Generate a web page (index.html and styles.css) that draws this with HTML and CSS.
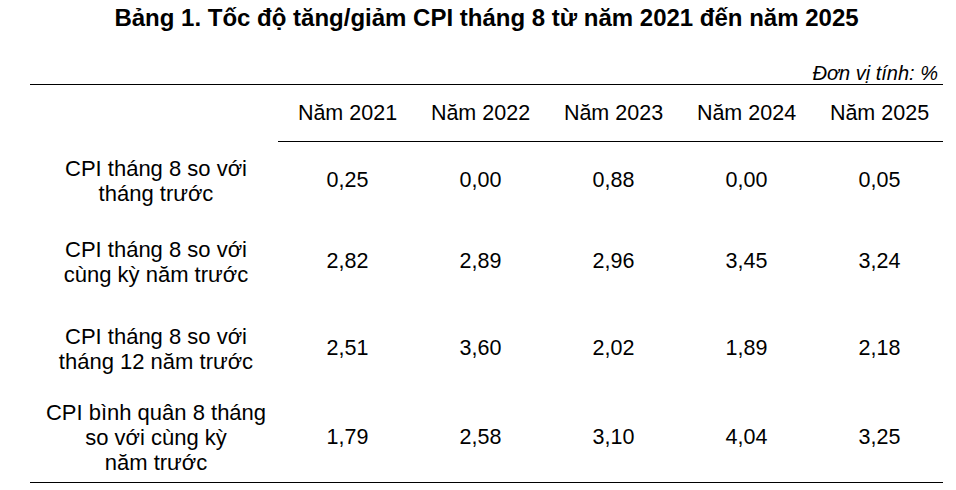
FILE: index.html
```html
<!DOCTYPE html>
<html lang="vi">
<head>
<meta charset="utf-8">
<title>Bảng 1</title>
<link rel="stylesheet" href="styles.css">
</head>
<body>
<div class="page">
  <h1 class="title">Bảng 1. Tốc độ tăng/giảm CPI tháng 8 từ năm 2021 đến năm 2025</h1>
  <div class="unit">Đơn vị tính: %</div>
  <table class="cpi">
    <colgroup>
      <col class="c-label">
      <col class="c-year"><col class="c-year"><col class="c-year"><col class="c-year"><col class="c-year">
    </colgroup>
    <thead>
      <tr class="head">
        <th class="blank"></th>
        <th>Năm 2021</th>
        <th>Năm 2022</th>
        <th>Năm 2023</th>
        <th>Năm 2024</th>
        <th>Năm 2025</th>
      </tr>
    </thead>
    <tbody>
      <tr class="r1">
        <td class="label">CPI tháng 8 so với<br>tháng trước</td>
        <td>0,25</td><td>0,00</td><td>0,88</td><td>0,00</td><td>0,05</td>
      </tr>
      <tr class="r2">
        <td class="label">CPI tháng 8 so với<br>cùng kỳ năm trước</td>
        <td>2,82</td><td>2,89</td><td>2,96</td><td>3,45</td><td>3,24</td>
      </tr>
      <tr class="r3">
        <td class="label">CPI tháng 8 so với<br>tháng 12 năm trước</td>
        <td>2,51</td><td>3,60</td><td>2,02</td><td>1,89</td><td>2,18</td>
      </tr>
      <tr class="r4">
        <td class="label">CPI bình quân 8 tháng<br>so với cùng kỳ<br>năm trước</td>
        <td>1,79</td><td>2,58</td><td>3,10</td><td>4,04</td><td>3,25</td>
      </tr>
    </tbody>
  </table>
</div>
</body>
</html>
```

FILE: styles.css
```css
html, body {
  margin: 0;
  padding: 0;
  background: #fff;
}

body {
  font-family: "Liberation Sans", Arial, sans-serif;
  color: #000;
}

.page {
  width: 913px;
  margin-left: 30px;
}

.title {
  margin: 4px 0 0 0;
  font-size: 24px;
  line-height: 28px;
  font-weight: bold;
  text-align: center;
}

.unit {
  margin-top: 29px;
  height: 23px;
  font-size: 20px;
  line-height: 24px;
  font-style: italic;
  text-align: right;
  padding-right: 5px;
}

.cpi {
  width: 913px;
  border-collapse: collapse;
  table-layout: fixed;
  border-top: 1px solid #000;
  border-bottom: 1px solid #000;
  font-size: 21.5px;
}

.c-label { width: 248px; }
.c-year { width: 133px; }

.cpi th,
.cpi td {
  padding: 0 0 0 6px;
  text-align: center;
  vertical-align: middle;
  font-weight: normal;
}

.cpi .label,
.cpi .blank {
  padding: 0 0 0 4px;
  font-size: 22px;
  line-height: 25px;
}

.head {
  height: 57px;
}

.head th {
  border-bottom: 1px solid #000;
}

.head th.blank {
  border-bottom: none;
}

.r1 { height: 78px; }
.r2 { height: 84px; }
.r3 { height: 90px; }
.r4 { height: 89px; }
```
